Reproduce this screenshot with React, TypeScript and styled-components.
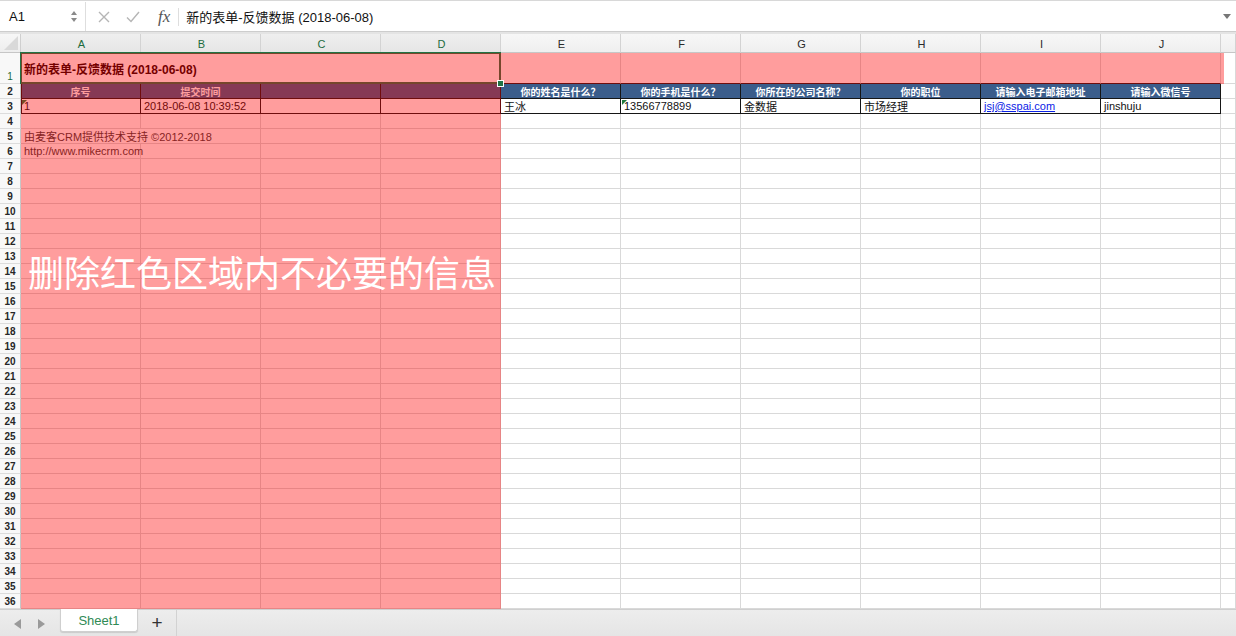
import React from 'react';
import styled, { createGlobalStyle, css } from 'styled-components';

const GlobalStyle = createGlobalStyle`
  html, body {
    margin: 0;
    padding: 0;
    background: #ececec;
    overflow: hidden;
  }
  body {
    font-family: "Liberation Sans", "Noto Sans CJK SC", sans-serif;
  }
`;

const COLS = ['A', 'B', 'C', 'D', 'E', 'F', 'G', 'H', 'I', 'J'];
const SELECTED_COLS = ['A', 'B', 'C', 'D'];

const HEADERS = [
  '序号', '提交时间', '', '', '你的姓名是什么？', '你的手机是什么？',
  '你所在的公司名称？', '你的职位', '请输入电子邮箱地址', '请输入微信号',
];

const Window = styled.div`
  width: 1236px;
  height: 636px;
  display: flex;
  flex-direction: column;
`;

/* ---------- formula bar ---------- */

const FormulaBar = styled.div`
  height: 32px;
  box-sizing: border-box;
  background: #fff;
  border-top: 1px solid #d8d8d8;
  border-bottom: 1px solid #cdcdcd;
  display: flex;
  align-items: center;
  padding-top: 1px;
`;

const NameBox = styled.div`
  width: 86px;
  height: 100%;
  box-sizing: border-box;
  padding: 0 8px 0 9px;
  border-right: 1px solid #dedede;
  display: flex;
  align-items: center;
  justify-content: space-between;
  font-size: 13px;
  color: #111;
`;

const Stepper = styled.div`
  display: flex;
  flex-direction: column;
  gap: 3px;
`;

const Arrow = styled.span<{ $dir: 'up' | 'down' | 'left' | 'right'; $size?: number; $color?: string }>`
  width: 0;
  height: 0;
  ${({ $dir, $size = 4, $color = '#8a8a8a' }) => {
    if ($dir === 'up') return css`border-left: ${$size}px solid transparent; border-right: ${$size}px solid transparent; border-bottom: ${$size + 1}px solid ${$color};`;
    if ($dir === 'down') return css`border-left: ${$size}px solid transparent; border-right: ${$size}px solid transparent; border-top: ${$size + 1}px solid ${$color};`;
    if ($dir === 'left') return css`border-top: ${$size}px solid transparent; border-bottom: ${$size}px solid transparent; border-right: ${$size + 2}px solid ${$color};`;
    return css`border-top: ${$size}px solid transparent; border-bottom: ${$size}px solid transparent; border-left: ${$size + 2}px solid ${$color};`;
  }}
`;

const EditButtons = styled.div`
  display: flex;
  align-items: center;
  gap: 16px;
  padding: 0 0 0 12px;
  height: 100%;
`;

const Fx = styled.span`
  font-family: "Liberation Serif", serif;
  font-style: italic;
  font-size: 17px;
  color: #555;
  margin-left: 2px;
  padding-right: 8px;
  border-right: 1px solid #dedede;
  line-height: 18px;
`;

const FormulaText = styled.div`
  flex: 1;
  padding-left: 7px;
  font-size: 13px;
  color: #111;
`;

const BarEnd = styled.div`
  width: 14px;
  display: flex;
  justify-content: center;
  padding-right: 2px;
`;

const Gap = styled.div`
  height: 2px;
  background: #e4e4e4;
`;

/* ---------- sheet ---------- */

const SheetWrap = styled.div`
  position: relative;
  height: 575px;
  overflow: hidden;
  background: #fff;
`;

const Sheet = styled.div`
  display: grid;
  grid-template-columns: 21px repeat(10, 120px) 1fr;
  grid-template-rows: 19px 31px repeat(35, 15px);
`;

const Corner = styled.div`
  background: linear-gradient(#f7f7f7, #eeeeee);
  border-right: 1px solid #cfcfcf;
  border-bottom: 1px solid #c6c6c6;
  box-sizing: border-box;
  position: relative;
  &::after {
    content: '';
    position: absolute;
    right: 2px;
    bottom: 2px;
    width: 0;
    height: 0;
    border-left: 14px solid transparent;
    border-bottom: 14px solid #d9d9d9;
  }
`;

const ColHead = styled.div<{ $sel?: boolean }>`
  background: ${p => (p.$sel ? 'linear-gradient(#efefef, #e6e6e6)' : 'linear-gradient(#f7f7f7, #efefef)')};
  border-right: 1px solid #d3d3d3;
  border-bottom: 1px solid #c6c6c6;
  box-sizing: border-box;
  display: flex;
  align-items: center;
  justify-content: center;
  padding: 1px 0 0 2px;
  font-size: 11px;
  color: ${p => (p.$sel ? '#1c6b3d' : '#2a2a2a')};
`;

const RowHead = styled.div<{ $sel?: boolean }>`
  background: #f8f8f8;
  border-right: 1px solid #c6c6c6;
  border-bottom: 1px solid #dcdcdc;
  box-sizing: border-box;
  display: flex;
  align-items: flex-end;
  justify-content: center;
  font-size: 10px;
  line-height: 13px;
  color: ${p => (p.$sel ? '#1c6b3d' : '#262626')};
  font-weight: ${p => (p.$sel ? 400 : 700)};
`;

type Variant = 'plain' | 'head' | 'boxed';

const Cell = styled.div<{ $variant?: Variant; $span?: number; $first?: boolean; $darkBottom?: boolean; $flag?: boolean }>`
  box-sizing: border-box;
  position: relative;
  min-width: 0;
  display: flex;
  align-items: center;
  padding: 0 3px;
  white-space: nowrap;
  font-size: 11px;
  color: #111;
  border-right: 1px solid #d9d9d9;
  border-bottom: 1px solid ${p => (p.$darkBottom ? '#161616' : '#d9d9d9')};
  ${p => p.$span && css`grid-column: span ${p.$span};`}
  ${p => p.$variant === 'head' && css`
    background: #3b5d8b;
    color: #fff;
    font-weight: 700;
    font-size: 10px;
    justify-content: center;
    border-right-color: #161616;
    border-bottom-color: #161616;
  `}
  ${p => p.$variant === 'boxed' && css`
    border-right-color: #161616;
    border-bottom-color: #161616;
  `}
  ${p => p.$first && css`box-shadow: inset 1px 0 0 #161616;`}
  ${p => p.$flag && css`
    &::before {
      content: '';
      position: absolute;
      left: 1px;
      top: 1px;
      width: 0;
      height: 0;
      border-top: 5px solid #1e7a3c;
      border-right: 5px solid transparent;
    }
  `}
`;

const TitleCell = styled(Cell)`
  font-size: 12px;
  font-weight: 700;
  color: #1a0000;
  padding-left: 3px;
  &::after {
    content: '';
    position: absolute;
    inset: -1px;
    border: 2px solid #217346;
    pointer-events: none;
  }
`;

const FillHandle = styled.span`
  position: absolute;
  right: -4px;
  bottom: -4px;
  width: 5px;
  height: 5px;
  background: #217346;
  border: 1px solid #fff;
  z-index: 1;
`;

const FootNote = styled.span`
  color: #3a3a3a;
  font-size: 11px;
`;

const Link = styled.a`
  color: #0b21e6;
  text-decoration: underline;
  font-size: 11px;
`;

/* overlay marking the part to delete */

const Mark = styled.div<{ $left: number; $top: number; $width: number; $height: number }>`
  position: absolute;
  left: ${p => p.$left}px;
  top: ${p => p.$top}px;
  width: ${p => p.$width}px;
  height: ${p => p.$height}px;
  background: rgba(255, 0, 0, 0.385);
  pointer-events: none;
`;

const MarkText = styled.div`
  position: absolute;
  left: 7px;
  top: 196px;
  font-family: "Noto Sans CJK SC", sans-serif;
  font-size: 36px;
  line-height: 44px;
  font-weight: 400;
  color: #fff;
  white-space: nowrap;
`;

/* ---------- sheet tabs ---------- */

const TabBar = styled.div`
  flex: 1;
  display: flex;
  align-items: stretch;
  background: linear-gradient(#ededed, #e5e5e5);
  border-top: 1px solid #cfcfcf;
`;

const NavArrows = styled.div`
  width: 60px;
  display: flex;
  align-items: center;
  gap: 17px;
  padding-left: 14px;
  box-sizing: border-box;
  padding-top: 2px;
`;

const Tab = styled.div`
  width: 78px;
  height: 23px;
  margin-top: -1px;
  padding-top: 1px;
  box-sizing: border-box;
  background: #fff;
  border: 1px solid #cfcfcf;
  border-top: none;
  border-radius: 0 0 3px 3px;
  box-shadow: 0 1px 1px rgba(0, 0, 0, 0.12);
  display: flex;
  align-items: center;
  justify-content: center;
  font-size: 13px;
  color: #2f8a55;
`;

const AddSheet = styled.div`
  width: 38px;
  display: flex;
  align-items: center;
  justify-content: center;
  border-right: 1px solid #d2d2d2;
  font-size: 19px;
  color: #333;
  padding-bottom: 1px;
`;

const CrossIcon = () => (
  <svg width="12" height="12" viewBox="0 0 12 12">
    <path d="M1 1 L11 11 M11 1 L1 11" stroke="#b5b5b5" strokeWidth="1.4" fill="none" />
  </svg>
);

const CheckIcon = () => (
  <svg width="14" height="12" viewBox="0 0 14 12">
    <path d="M1 6.5 L5 10.5 L13 1" stroke="#b5b5b5" strokeWidth="1.4" fill="none" />
  </svg>
);

function row3Cell(col: string) {
  switch (col) {
    case 'A': return <Cell key={col} $variant="boxed" $first $flag>1</Cell>;
    case 'B': return <Cell key={col} $variant="boxed">2018-06-08 10:39:52</Cell>;
    case 'E': return <Cell key={col} $variant="boxed">王冰</Cell>;
    case 'F': return <Cell key={col} $variant="boxed" $flag>13566778899</Cell>;
    case 'G': return <Cell key={col} $variant="boxed">金数据</Cell>;
    case 'H': return <Cell key={col} $variant="boxed">市场经理</Cell>;
    case 'I': return <Cell key={col} $variant="boxed"><Link href="#">jsj@sspai.com</Link></Cell>;
    case 'J': return <Cell key={col} $variant="boxed">jinshuju</Cell>;
    default: return <Cell key={col} $variant="boxed" />;
  }
}

export default function App() {
  const rows: React.ReactNode[] = [];

  for (let r = 1; r <= 36; r++) {
    rows.push(<RowHead key={`h${r}`} $sel={r === 1}>{r}</RowHead>);
    if (r === 1) {
      rows.push(
        <TitleCell key="title" $span={4} $darkBottom>
          新的表单-反馈数据 (2018-06-08)
          <FillHandle />
        </TitleCell>,
      );
      COLS.slice(4).forEach(c => rows.push(<Cell key={`1${c}`} $darkBottom />));
    } else if (r === 2) {
      HEADERS.forEach((h, i) => rows.push(<Cell key={`2${i}`} $variant="head" $first={i === 0}>{h}</Cell>));
    } else if (r === 3) {
      COLS.forEach(c => rows.push(row3Cell(c)));
    } else if (r === 5) {
      rows.push(<Cell key="5A" $span={2}><FootNote>由麦客CRM提供技术支持 ©2012-2018</FootNote></Cell>);
      COLS.slice(2).forEach(c => rows.push(<Cell key={`5${c}`} />));
    } else if (r === 6) {
      rows.push(<Cell key="6A"><FootNote>http://www.mikecrm.com</FootNote></Cell>);
      COLS.slice(1).forEach(c => rows.push(<Cell key={`6${c}`} />));
    } else {
      COLS.forEach(c => rows.push(<Cell key={`${r}${c}`} />));
    }
    rows.push(<Cell key={`x${r}`} />);
  }

  return (
    <Window>
      <GlobalStyle />
      <FormulaBar>
        <NameBox>
          A1
          <Stepper>
            <Arrow $dir="up" $size={3} />
            <Arrow $dir="down" $size={3} />
          </Stepper>
        </NameBox>
        <EditButtons>
          <CrossIcon />
          <CheckIcon />
          <Fx>fx</Fx>
        </EditButtons>
        <FormulaText>新的表单-反馈数据 (2018-06-08)</FormulaText>
        <BarEnd>
          <Arrow $dir="down" $size={4} $color="#777" />
        </BarEnd>
      </FormulaBar>
      <Gap />
      <SheetWrap>
        <Sheet>
          <Corner />
          {COLS.map(c => (
            <ColHead key={c} $sel={SELECTED_COLS.includes(c)}>{c}</ColHead>
          ))}
          <ColHead />
          {rows}
        </Sheet>
        <Mark $left={21} $top={19} $width={480} $height={556}>
          <MarkText>删除红色区域内不必要的信息</MarkText>
        </Mark>
        <Mark $left={501} $top={19} $width={723} $height={31} />
      </SheetWrap>
      <TabBar>
        <NavArrows>
          <Arrow $dir="left" $size={5} $color="#9a9a9a" />
          <Arrow $dir="right" $size={5} $color="#9a9a9a" />
        </NavArrows>
        <Tab>Sheet1</Tab>
        <AddSheet>+</AddSheet>
      </TabBar>
    </Window>
  );
}
